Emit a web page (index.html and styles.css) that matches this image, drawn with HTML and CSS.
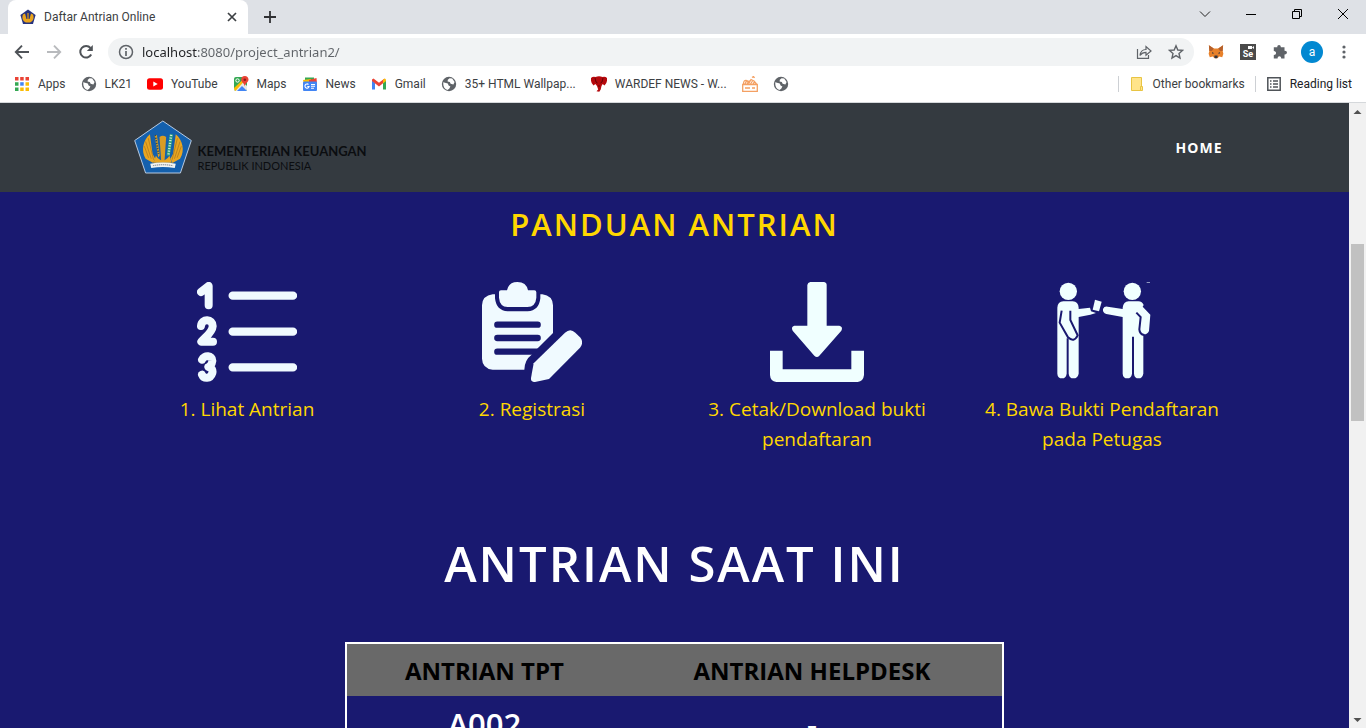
FILE: index.html
```html
<!DOCTYPE html>
<html lang="id">
<head>
<meta charset="utf-8">
<title>Daftar Antrian Online</title>
<link rel="stylesheet" href="styles.css">
</head>
<body>
<svg class="defs" aria-hidden="true">
  <symbol id="globe" viewBox="0 0 16 16"><circle cx="8" cy="8" r="7.2" fill="#5f6368"/><path d="M2.2 6.2 6.8 7.4 7.6 9.6 9.4 10.4 8.2 12.8 6.4 14C3.6 13.2 2 10.6 2.2 6.2ZM8.6 2.2 11.2 2.6 13.6 6 12.4 8.4 9.6 7.8 8.8 6 6.6 5.6 6.8 3.8Z" fill="#fff"/></symbol>
</svg>

<header class="browser">
  <div class="tabstrip">
    <div class="tab">
      <svg width="16" height="16" viewBox="0 0 16 16"><path d="M8 .5 15.6 6 13 15H3L.4 6Z" fill="#26337f"/><path d="M3 5.5C1.5 9 3 12.5 6 13.4H10C13 12.5 14.500 9 13 5.500L11 4.500 9.500 10H6.500L5 4.500Z" fill="#eaa41c"/><path d="M7.200 4H8.800V10H7.200Z" fill="#b9852b"/></svg>
      <span class="tab-title">Daftar Antrian Online</span>
      <button class="icon-btn" aria-label="Close tab"><svg width="16" height="16" viewBox="0 0 16 16" fill="none" stroke="#3c4043" stroke-width="1.700"><path d="M4 4 12 12M12 4 4 12"/></svg></button>
    </div>
    <button class="icon-btn new-tab" aria-label="New tab"><svg width="16" height="16" viewBox="0 0 16 16" fill="none" stroke="#303134" stroke-width="1.800"><path d="M8 2V14M2 8H14"/></svg></button>
    <div class="window-buttons">
      <button class="icon-btn" aria-label="Search tabs"><svg width="12" height="12" viewBox="0 0 12 12" fill="none" stroke="#222"><path d="M1 3.500 6 8.500 11 3.500"/></svg></button>
      <button class="icon-btn" aria-label="Minimize"><svg width="12" height="12" viewBox="0 0 12 12" fill="none" stroke="#000"><path d="M1 6.500H11"/></svg></button>
      <button class="icon-btn" aria-label="Restore"><svg width="12" height="12" viewBox="0 0 12 12" fill="none" stroke="#000"><path d="M1.500 3.500H8.500V10.500H1.500ZM3.500 3.500V1.500H10.500V8.500H8.500"/></svg></button>
      <button class="icon-btn" aria-label="Close"><svg width="12" height="12" viewBox="0 0 12 12" fill="none" stroke="#000"><path d="M1 1 11 11M11 1 1 11"/></svg></button>
    </div>
  </div>

  <div class="toolbar">
    <button class="icon-btn" aria-label="Back"><svg width="16" height="16" viewBox="0 0 16 16" fill="none" stroke="#4f5358" stroke-width="1.900"><path d="M15 8H2M8 1.700 1.800 8 8 14.300"/></svg></button>
    <button class="icon-btn" aria-label="Forward"><svg width="16" height="16" viewBox="0 0 16 16" fill="none" stroke="#b8babd" stroke-width="1.900"><path d="M1 8H14M8 1.700 14.200 8 8 14.300"/></svg></button>
    <button class="icon-btn" aria-label="Reload"><svg width="16" height="16" viewBox="0 0 16 16"><path d="M13.200 10.500A5.800 5.800 0 1 1 12.500 4" fill="none" stroke="#4f5358" stroke-width="2"/><path d="M14.800 1V7H8.800Z" fill="#4f5358"/></svg></button>
    <div class="omnibox">
      <svg width="16" height="16" viewBox="0 0 16 16" fill="none" stroke="#5f6368" stroke-width="1.500"><circle cx="8" cy="8" r="6.500"/><path d="M8 7V12M8 4V5.700" stroke-width="1.700"/></svg>
      <input class="url" type="text" aria-label="Address" value="localhost:8080/project_antrian2/">
      <button class="icon-btn" aria-label="Share"><svg width="16" height="16" viewBox="0 0 16 16" fill="none" stroke="#5f6368" stroke-width="1.200"><path d="M1.500 5V14.400H12.500V11"/><path d="M4 11.500C4.500 7.500 6.500 5.500 10 5.500V2.500L15 7 10 11.200V8.300C7.500 8.300 5.500 9.300 4 11.500Z"/></svg></button>
      <button class="icon-btn" aria-label="Bookmark"><svg width="16" height="16" viewBox="0 0 16 16" fill="none" stroke="#5f6368" stroke-width="1.400"><path d="M8 1.800 9.800 6 14.500 6.400 11 9.500 12 14 8 11.600 4 14 5 9.500 1.500 6.400 6.200 6Z"/></svg></button>
    </div>
    <div class="extensions">
      <button class="icon-btn" aria-label="MetaMask"><svg width="16" height="16" viewBox="0 0 18 16"><path d="M1 .5 6.500 4H11.500L17 .5 16.500 7 17.300 10 16 14 12.500 13.200 10.800 15H7.200L5.500 13.200 2 14 .7 10 1.500 7Z" fill="#e8812a"/><path d="M1 .5 6.500 4 4.500 7 1.500 7ZM17 .5 11.500 4 13.500 7 16.500 7Z" fill="#b5602b"/><path d="M4.500 8 7 9.500 4.800 10ZM13.500 8 11 9.500 13.200 10Z" fill="#383b45"/><path d="M7.400 12H10.600L11 14 10 15H8L7 14Z" fill="#30343f"/></svg></button>
      <button class="icon-btn selenium" aria-label="Selenium IDE"><svg width="12" height="4" viewBox="0 0 12 4" fill="#fff"><path d="M6 0H10V3H6ZM10 1.500 12 0V3Z"/></svg><span>Se</span></button>
      <button class="icon-btn" aria-label="Extensions"><svg width="16" height="16" viewBox="0 0 16 16" fill="#5f6368"><path d="M5.300 3.200C5 .3 9 .3 8.800 3.200H12.500V6.800C15.800 6.500 15.800 10.700 12.500 10.400V14.500H9.200C9.300 11.500 5.500 11.500 5.600 14.500H1.800V11C4.800 11 4.800 7 1.800 7V3.200Z"/></svg></button>
      <button class="avatar" aria-label="Profile">a</button>
      <button class="icon-btn" aria-label="Menu"><svg width="16" height="16" viewBox="0 0 16 16" fill="#5f6368"><circle cx="8" cy="3" r="1.600"/><circle cx="8" cy="8" r="1.600"/><circle cx="8" cy="13" r="1.600"/></svg></button>
    </div>
  </div>

  <nav class="bookmarks" aria-label="Bookmarks">
    <a href="#"><svg width="16" height="16" viewBox="0 0 16 16"><path d="M1 1h3.500v3.500H1ZM6.200 1h3.500v3.500H6.200ZM11.500 1H15v3.500h-3.500Z" fill="#ea4335"/><path d="M1 6.200h3.500v3.500H1ZM1 11.500h3.500V15H1Z" fill="#34a853"/><path d="M6.200 6.200h3.500v3.500H6.200Z" fill="#4285f4"/><path d="M11.500 6.200H15v3.500h-3.500ZM6.200 11.500h3.500V15H6.200ZM11.500 11.500H15V15h-3.500Z" fill="#fbbc04"/></svg>Apps</a>
    <a href="#"><svg width="16" height="16"><use href="#globe"/></svg>LK21</a>
    <a href="#"><svg width="16" height="16" viewBox="0 0 16 16"><rect y="2.300" width="16" height="11.400" rx="2.500" fill="#f00"/><path d="M6.300 5.500 10.700 8 6.300 10.500Z" fill="#fff"/></svg>YouTube</a>
    <a href="#"><svg width="16" height="16" viewBox="0 0 16 16"><rect x="1" y="1" width="13" height="14" rx="2" fill="#34a853"/><path d="M1 13 9 5 14 10V13Q14 15 12 15H3Q1 15 1 13Z" fill="#e8e8e8"/><path d="M4 15 9 10 14 15Z" fill="#4285f4"/><path d="M1 12 9 4.500 10.500 6 2.500 15Q1 14.500 1 12Z" fill="#fbbc04"/><circle cx="4.500" cy="4.500" r="1.700" fill="none" stroke="#fff"/><path d="M11.800 0A3.600 3.600 0 0 0 8.200 3.700C8.200 6 11.300 7 11.800 10.500 12.300 7 15.500 6 15.500 3.700A3.600 3.600 0 0 0 11.800 0Z" fill="#ea4335"/><circle cx="11.800" cy="3.700" r="1.300" fill="#8c1d18"/></svg>Maps</a>
    <a href="#"><svg width="16" height="16" viewBox="0 0 16 16"><path d="M3 1.500H12V6H3Z" fill="#34a853"/><path d="M1 4 9 3V8H2Z" fill="#fbbc04"/><path d="M7 4 14.500 2 15 8H7Z" fill="#ea4335"/><rect x="1" y="5.500" width="14" height="9.500" rx="1" fill="#4285f4"/><path d="M6.500 8.500A2.100 2.100 0 1 0 7.100 10.500H5.300M9 8.500H13M9 10.300H13M9 12.200H12" fill="none" stroke="#fff" stroke-width="1.100"/></svg>News</a>
    <a href="#"><svg width="16" height="16" viewBox="0 0 16 16"><path d="M1 4.500V13.500H4V7Z" fill="#4285f4"/><path d="M15 4.500V13.500H12V7Z" fill="#34a853"/><path d="M1 3.500 2.500 2.500 8 6.800 13.500 2.500 12 7.300 8 10.400 1 5Z" fill="#ea4335"/><path d="M12 4 13.500 2.500Q15 2.500 15 4V5L12 7.400Z" fill="#fbbc04"/></svg>Gmail</a>
    <a href="#"><svg width="16" height="16"><use href="#globe"/></svg>35+ HTML Wallpap...</a>
    <a href="#"><svg width="16" height="16" viewBox="0 0 16 16"><path d="M0 2Q2 0 4.500 1 8-.5 11.500 1 14 0 16 2 16.500 7 13.500 9.500L11.700 8 10.500 10 9.700 13.500 8.300 15.800 5.500 15.300 7.200 13.500 6 10 4.300 8 2.500 9.500Q-.5 7 0 2Z" fill="#b5090d"/><path d="M4 2 5 6 6.500 7M12 2 11 6 9.500 7M7 10H9" fill="none" stroke="#4c0306" stroke-width=".8"/></svg>WARDEF NEWS - W...</a>
    <a href="#" aria-label="Recipes"><svg width="16" height="16" viewBox="0 0 16 16" fill="none" stroke="#f4a063" stroke-width="1.300"><path d="M.7 8.500H15.300V15.300H.7ZM1.500 8Q1.500 3.500 5 4.500L7 7 9 3.500 12 5 14.500 8M3 8 4.500 5M5 8 7.500 4.500M8.500 8 10.500 5M11 8 12.500 6M3 12H8M10 12H13M10 1.500 11.500.500 12.500 2"/></svg></a>
    <a href="#" aria-label="Website"><svg width="16" height="16"><use href="#globe"/></svg></a>
    <div class="bookmarks-end">
      <a href="#"><svg width="16" height="16" viewBox="0 0 16 16"><path d="M2.500 1.500H12.500V14.500H2.500Z" fill="#ffe48a" stroke="#e8c443"/><path d="M11.500 10.500H13.500V14.500H11.500Z" fill="#ffe48a" stroke="#e8c443"/></svg>Other bookmarks</a>
      <a class="reading" href="#"><svg width="16" height="16" viewBox="0 0 16 16" fill="none" stroke="#4f5358" stroke-width="1.500"><path d="M1.800 1.800H14.200V14.200H1.800ZM4 5H5.500M7 5H12M4 8H5.500M7 8H12M4 11H5.500M7 11H12"/></svg>Reading list</a>
    </div>
  </nav>
</header>

<div class="viewport">
  <div class="page">
    <header class="navbar">
      <div class="container navbar-inner">
        <a class="brand" href="#">
          <svg width="58" height="54" viewBox="42 43 175 163"><path d="M129 46 215 105 182 203H77L44 105Z" fill="#1460ad" stroke="#b9cbe0" stroke-width="3"/><path d="M90 86C70 102 62 135 77 160L100 173 106 160 98 145ZM168 86C188 102 197 135 181 160L158 173 152 160 160 145Z" fill="#e9a520"/><path d="M85 98 101 163M77 108 94 160M73 122 86 157M173 98 157 163M181 108 164 160M185 122 172 157" stroke="#a8721c" stroke-width="2"/><path d="M119 94Q129 87 139 94L134 168H124ZM104 88 111 88 120 150 115 156Z" fill="#d99c24"/><path d="M106 88 116 145" stroke="#2d4c56" stroke-width="5" stroke-dasharray="4 4"/><path d="M155 86 145 151" stroke="#2fa07c" stroke-width="10"/><path d="M154 88 146 149" stroke="#e6f2e8" stroke-width="7" stroke-dasharray="3 5"/><path d="M108 151Q129 180 149 151L156 172H101Z" fill="#e9a520"/><path d="M91 175Q129 168 168 175L165 188Q129 181 94 188Z" fill="#f4f4f0"/><path d="M99 181Q129 175 160 181" fill="none" stroke="#6d7684" stroke-width="3" stroke-dasharray="4 2"/></svg>
          <span class="brand-text"><strong>KEMENTERIAN KEUANGAN</strong><span>REPUBLIK INDONESIA</span></span>
        </a>
        <a class="nav-link" href="#">HOME</a>
      </div>
    </header>

    <main>
      <section class="guide">
        <h2>PANDUAN ANTRIAN</h2>
        <div class="container steps">
          <div class="step">
            <svg class="step-icon" viewBox="81 36 300 300" fill="none" stroke="#f0faff" stroke-linecap="round" stroke-linejoin="round"><path d="M188 77H369M188 185H369M188 292H369" stroke-width="25"/><path d="M93 66 116 48V106" stroke-width="24"/><path d="M93 168C95 144 129 146 128 169 127 187 107 200 94 215H129" stroke-width="24"/><path d="M96 269C102 254 128 256 127 273 126 284 118 290 115 291 126 293 129 301 127 309 121 328 101 326 96 314" stroke-width="24"/></svg>
            <p>1. Lihat Antrian</p>
          </div>
          <div class="step">
            <svg class="step-icon" viewBox="66 36 300 300" fill="#f0faff"><path d="M98 73H105V85Q109 122 143 124H203Q237 122 241 85V73H247Q278 77 279 106V190L214 255Q194 270 193 299H98Q67 295 66 266V106Q67 77 98 73Z"/><path d="M117 66Q117 61 123 61H141Q146 36 172 36 199 36 204 61H223Q229 61 229 67V83Q227 110 202 111H143Q119 110 117 83Z"/><path d="M112 164H233M112 204H233M112 245H233" stroke="#191970" stroke-width="19" stroke-linecap="round"/><path d="M232 236 279 190V225L214 275Z" fill="#191970"/><path d="M221 280 315 188Q331 173 346 188L360 202Q373 217 360 233L267 327 225 336Q212 337 213 324Z"/></svg>
            <p>2. Registrasi</p>
          </div>
          <div class="step">
            <svg class="step-icon" viewBox="201 36 300 300" fill="#f0ffff"><path d="M331 36H371Q380 37 380 45V167H418Q430 170 424 182L358 257Q351 265 343 257L278 182Q272 170 283 167H322V45Q323 37 331 36Z"/><path d="M210 242H248V298H454V242H492V315Q490 334 473 336H229Q211 334 210 315Z"/></svg>
            <p>3. Cetak/Download bukti pendaftaran</p>
          </div>
          <div class="step">
            <svg class="step-icon" viewBox="217 36 300 300" fill="#f0ffff"><circle cx="266" cy="64" r="26"/><circle cx="458" cy="64" r="26"/><path d="M233 113Q234 95 251 94H279Q296 95 297 113V117L331 113 334 124 349 129 332 134 297 141V311Q294 325 281 325 269 325 267 311V205H261V311Q259 325 247 325 234 325 233 311Z"/><path d="M246 122 240 158 265 202Q283 219 294 196L272 150V122" fill="none" stroke="#191970" stroke-width="6"/><path d="M346 89 366 95 358 124 339 119Z"/><path d="M429 117V113Q431 95 447 94H476Q488 95 492 105L489 110 512 134 508 183Q503 194 491 193V311Q488 325 477 325 464 325 463 311V200H457V311Q455 325 443 325 430 325 429 311V141L380 132Q368 128 370 117 374 108 384 110Z"/><path d="M470 128 483 141 479 178Q480 193 494 195" fill="none" stroke="#191970" stroke-width="6"/><path d="M501 37H511" stroke="#f0ffff" stroke-width="2"/></svg>
            <p>4. Bawa Bukti Pendaftaran pada Petugas</p>
          </div>
        </div>
      </section>

      <section class="current">
        <h1>ANTRIAN SAAT INI</h1>
        <table class="queue">
          <thead><tr><th class="col-tpt" scope="col">ANTRIAN TPT</th><th scope="col">ANTRIAN HELPDESK</th></tr></thead>
          <tbody><tr><td>A002</td><td>-</td></tr></tbody>
        </table>
      </section>
    </main>
  </div>

  <div class="scrollbar" aria-hidden="true">
    <svg width="17" height="17" viewBox="0 0 17 17"><path d="M4.500 11 8.500 7 12.500 11Z" fill="#505050"/></svg>
    <div class="track"><div class="thumb"></div></div>
    <svg width="17" height="17" viewBox="0 0 17 17"><path d="M4.500 7 8.500 11 12.500 7Z" fill="#505050"/></svg>
  </div>
</div>
</body>
</html>
```

FILE: styles.css
```css
* { box-sizing: border-box; }

body {
  margin: 0;
  height: 100vh;
  overflow: hidden;
  display: flex;
  flex-direction: column;
  font-family: "Open Sans", "Noto Sans", sans-serif;
}

svg { display: block; flex: none; }
a { color: inherit; text-decoration: none; }
button { font: inherit; border: 0; padding: 0; background: none; }
.defs { position: absolute; width: 0; height: 0; }
.icon-btn { display: flex; flex: none; }

/* Browser window */
.browser {
  flex: none;
  background: #fff;
  border-bottom: 1px solid #d5d8db;
  font-family: Roboto, sans-serif;
  font-size: 12px;
  color: #3c4043;
}

.tabstrip {
  display: flex;
  align-items: center;
  height: 34px;
  padding-left: 8px;
  background: #dee1e6;
}

.tab {
  display: flex;
  align-items: center;
  gap: 8px;
  width: 240px;
  height: 34px;
  padding: 0 8px 0 12px;
  border-radius: 8px 8px 0 0;
  background: #fff;
}
.tab-title { flex: 1; }
.new-tab { margin-left: 14px; }

.window-buttons {
  display: flex;
  gap: 34px;
  margin-left: auto;
  padding: 0 17px 6px 0;
}

.toolbar {
  display: flex;
  align-items: center;
  gap: 16px;
  height: 36px;
  padding: 0 14px;
}

.omnibox {
  display: flex;
  flex: 1;
  align-items: center;
  gap: 16px;
  height: 28px;
  margin-left: -2px;
  padding: 0 10px;
  border-radius: 14px;
  background: #f1f3f4;
}

.url {
  flex: 1;
  min-width: 0;
  margin-left: -8px;
  padding: 0;
  border: 0;
  outline: 0;
  font: 13px "Noto Sans", sans-serif;
  color: #5f6368;
  background: linear-gradient(90deg, #202124 55px, #5f6368 55px);
  background-clip: text;
  -webkit-text-fill-color: transparent;
}

.extensions { display: flex; align-items: center; gap: 16px; margin-left: -2px; }

.selenium {
  flex-direction: column;
  justify-content: space-between;
  width: 16px;
  height: 16px;
  padding: 2px 2px 1px;
  background: #4a4a4a;
  color: #fff;
  font-size: 9px;
  font-weight: 700;
  line-height: 9px;
}

.avatar {
  width: 22px;
  height: 22px;
  margin: 0 -3px;
  border-radius: 50%;
  background: #0288d1;
  color: #fff;
  font-size: 12px;
  line-height: 20px;
}

.bookmarks {
  display: flex;
  align-items: center;
  gap: 15px;
  height: 32px;
  padding: 0 14px 4px;
}
.bookmarks a { display: flex; align-items: center; gap: 8px; white-space: nowrap; }
.bookmarks-end { display: flex; gap: 10px; margin-left: auto; }
.bookmarks-end a { padding-left: 10px; border-left: 1px solid #cdd0d4; }
.reading { color: #202124; }

/* Site */
.viewport { display: flex; flex: 1; min-height: 0; }
.page { flex: 1; min-width: 0; overflow: hidden; background: #191970; }
.container { width: 100%; max-width: 1140px; margin: 0 auto; }

.navbar { padding: 15px 0 17px; background: #343a40; }
.navbar-inner {
  display: flex;
  align-items: center;
  justify-content: space-between;
  min-height: 57px;
  padding: 0 22px 0 29px;
}
.brand { display: flex; align-items: center; gap: 6px; color: #0b0d10; }
.brand-text {
  display: flex;
  flex-direction: column;
  padding-top: 22px;
  font-family: Lato, sans-serif;
  font-size: 11px;
  line-height: 14px;
}
.brand-text strong { font-size: 13px; font-weight: 700; line-height: 16px; }
.nav-link { padding-top: 2px; color: #fff; font-size: 14px; font-weight: 700; letter-spacing: 1px; }

h1, h2 { margin: 0; font-weight: 600; text-align: center; }

.guide { padding-top: 12px; color: #ffd700; }
.guide h2 { font-size: 31px; line-height: 40px; letter-spacing: 2px; }
.steps { display: grid; grid-template-columns: repeat(4, 1fr); padding-top: 38px; }
.step { padding: 0 20px; text-align: center; }
.step-icon { width: 100px; height: 100px; margin: 0 auto; }
.step p { margin: 12px 0 0; font-size: 19px; line-height: 30px; }

.current { padding-top: 79px; color: #fff; }
.current h1 { font-size: 49px; line-height: 60px; letter-spacing: 2px; }

.queue {
  width: 49%;
  max-width: 659px;
  margin: 49px auto 0;
  border: 2px solid #fff;
  border-collapse: collapse;
  text-align: center;
}
.queue th {
  padding: 9px 8px 7px;
  background: #696969;
  color: #000;
  font-size: 24px;
  line-height: 36px;
}
.queue td { padding: 6px 8px; font-size: 31px; font-weight: 600; line-height: 44px; }
.col-tpt { width: 42%; }

.scrollbar { display: flex; flex-direction: column; flex: none; width: 17px; background: #f1f1f1; }
.track { flex: 1; padding: 0 2px; }
.thumb { height: 30%; background: #c1c1c1; }
.track::before { content: ""; display: block; height: 21%; }
```
